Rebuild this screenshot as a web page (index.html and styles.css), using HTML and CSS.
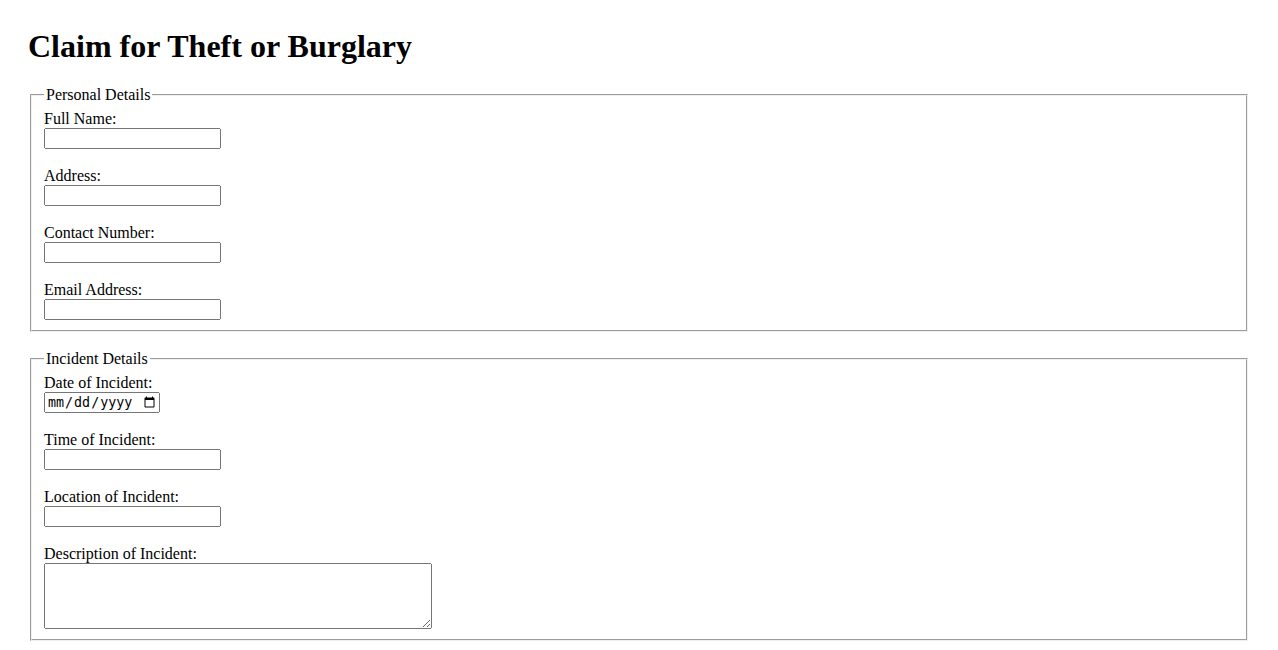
FILE: index.html
```html
<!DOCTYPE html>
<html lang="en">
<head>
<meta charset="utf-8">
<title>Claim for Theft or Burglary</title>
<link rel="stylesheet" href="styles.css">
</head>
<body>
<h1 class="title">Claim for Theft or Burglary</h1>
<form class="claim-form">
  <fieldset class="group">
    <legend class="group-legend">Personal Details</legend>
    <div class="fields">
      <div class="field">
        <label class="field-label" for="fullName">Full Name:</label>
        <input class="text-input" type="text" id="fullName" name="fullName">
      </div>
      <div class="field">
        <label class="field-label" for="address">Address:</label>
        <input class="text-input" type="text" id="address" name="address">
      </div>
      <div class="field">
        <label class="field-label" for="contact">Contact Number:</label>
        <input class="text-input" type="tel" id="contact" name="contact">
      </div>
      <div class="field">
        <label class="field-label" for="email">Email Address:</label>
        <input class="text-input" type="email" id="email" name="email">
      </div>
    </div>
  </fieldset>
  <fieldset class="group">
    <legend class="group-legend">Incident Details</legend>
    <div class="fields">
      <div class="field">
        <label class="field-label" for="date">Date of Incident:</label>
        <input class="date-input" type="date" id="date" name="date">
      </div>
      <div class="field">
        <label class="field-label" for="time">Time of Incident:</label>
        <input class="text-input" type="text" id="time" name="time">
      </div>
      <div class="field">
        <label class="field-label" for="location">Location of Incident:</label>
        <input class="text-input" type="text" id="location" name="location">
      </div>
      <div class="field">
        <label class="field-label" for="description">Description of Incident:</label>
        <textarea class="text-area" id="description" name="description" rows="4" cols="50"></textarea>
      </div>
    </div>
  </fieldset>
</form>
</body>
</html>
```
FILE: styles.css
```css
html, body {
  background: #ffffff;
}

body {
  margin: 0;
  padding: 28px 28px 0;
  font-family: "Liberation Serif", "Times New Roman", serif;
  font-size: 16px;
  color: #000000;
}

.title {
  margin: 0 0 21px;
  font-size: 32px;
  font-weight: bold;
  line-height: 37px;
}

.claim-form {
  display: flex;
  flex-direction: column;
  gap: 18px;
}

.group {
  margin: 0 2px;
  padding: 6px 12px 10px;
  border: 2px groove #f0f0f0;
}

.group-legend {
  padding: 0 2px;
  line-height: 18px;
}

.fields {
  display: flex;
  flex-direction: column;
  gap: 18px;
}

.field {
  display: flex;
  flex-direction: column;
  align-items: flex-start;
}

.field-label {
  line-height: 18px;
}

.text-input {
  box-sizing: border-box;
  width: 177px;
  height: 21px;
  margin: 0;
}

.date-input {
  box-sizing: border-box;
  width: 116px;
  height: 21px;
  margin: 0;
}

.text-area {
  display: block;
  box-sizing: border-box;
  width: 388px;
  height: 66px;
  margin: 0;
}
```
